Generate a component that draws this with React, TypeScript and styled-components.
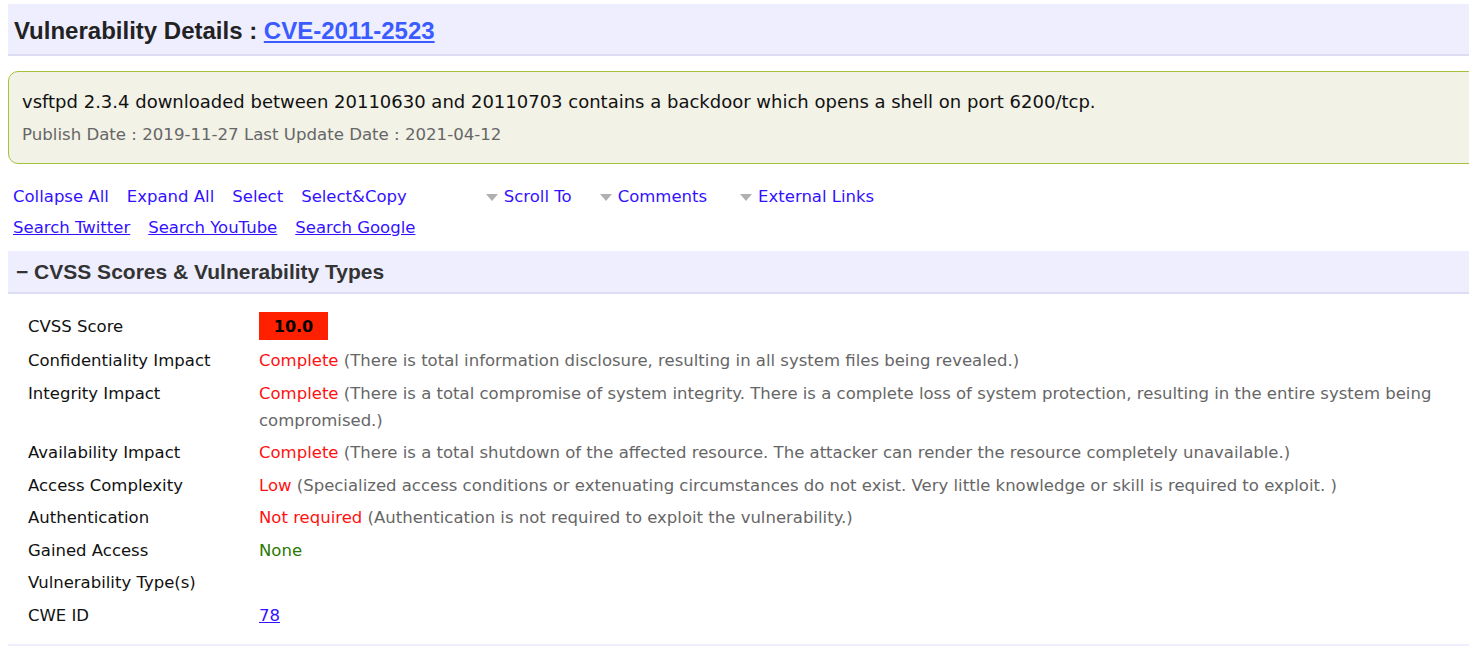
import React from "react";
import styled, { createGlobalStyle } from "styled-components";

const Global = createGlobalStyle`
  html, body { margin: 0; padding: 0; background: #fff; overflow: hidden; }
  body { padding: 4px 0 0 8px; font-family: "DejaVu Sans", Verdana, sans-serif; }
`;

const Page = styled.div`
  width: 1475px;
`;

const TitleBar = styled.div`
  height: 52px;
  background: #eeeeff;
  border-bottom: 2px solid #dcdcf2;
  display: flex;
  align-items: center;
  padding: 3px 0 0 6px;
  box-sizing: border-box;
`;

const Title = styled.h1`
  margin: 0;
  font-family: "Liberation Sans", Arial, sans-serif;
  font-weight: bold;
  font-size: 24px;
  color: #222;
  a { color: #3a5bff; text-decoration: underline; }
`;

const Summary = styled.div`
  margin-top: 15px;
  background: #f2f2e7;
  border: 1px solid #a5c23a;
  border-radius: 10px;
  height: 93px;
  box-sizing: border-box;
  padding: 17px 0 0 13px;
`;

const SummaryText = styled.div`
  font-size: 18px;
  line-height: 26px;
  color: #111;
`;

const DateLine = styled.div`
  font-size: 16.6px;
  line-height: 26px;
  color: #666;
  margin-top: 7px;
`;

const LinkBar = styled.div`
  margin-top: 22px;
  padding-left: 5px;
  display: flex;
  flex-direction: column;
  gap: 11px;
`;

const LinkRow = styled.div`
  display: flex;
  align-items: center;
  height: 20px;
`;

const ActLink = styled.a<{ $underline?: boolean; $gap?: number }>`
  font-family: "DejaVu Sans", Verdana, sans-serif;
  font-size: 16.5px;
  color: #3311ff;
  text-decoration: ${(p) => (p.$underline ? "underline" : "none")};
  margin-right: ${(p) => p.$gap ?? 18}px;
  white-space: nowrap;
`;

const Drop = styled.span<{ $gap: number }>`
  display: inline-flex;
  align-items: center;
  gap: 6px;
  margin-right: ${(p) => p.$gap}px;
`;

const Caret = styled.span`
  width: 0;
  height: 0;
  margin-top: 2px;
  border-left: 6px solid transparent;
  border-right: 6px solid transparent;
  border-top: 7px solid #b0b0b0;
`;

const SectionHead = styled.div`
  margin-top: 14px;
  height: 43px;
  box-sizing: border-box;
  background: #eeeeff;
  border-bottom: 2px solid #dcdcf2;
  display: flex;
  align-items: center;
  padding-left: 8px;
  font-family: "Liberation Sans", Arial, sans-serif;
  font-weight: bold;
  font-size: 21px;
  color: #333;
`;

const Table = styled.div`
  margin-top: 13px;
  padding-left: 20px;
  display: grid;
  grid-template-columns: 231px 1fr;
  width: 1440px;
  font-family: "DejaVu Sans", Verdana, sans-serif;
  font-size: 16.5px;
  line-height: 27px;
`;

const Label = styled.div<{ $tall?: boolean }>`
  color: #111;
  padding: ${(p) => (p.$tall ? "5px 0 4px" : "3px 0 2.5px")};
  display: flex;
  align-items: ${(p) => (p.$tall ? "center" : "flex-start")};
`;

const Value = styled.div<{ $tall?: boolean }>`
  color: #666;
  padding: ${(p) => (p.$tall ? "5px 0 4px" : "3px 0 2.5px")};
`;

const Score = styled.span`
  display: inline-flex;
  align-items: center;
  justify-content: center;
  width: 69px;
  height: 28px;
  background: #ff2000;
  color: #000;
  font-family: "DejaVu Sans", Verdana, sans-serif;
  font-weight: bold;
  font-size: 16px;
`;

const Level = styled.span<{ $tone: "red" | "green" }>`
  color: ${(p) => (p.$tone === "red" ? "#ff1111" : "#2a7a00")};
`;

const CweLink = styled.a`
  color: #3311ff;
  text-decoration: underline;
`;

const BottomBar = styled.div`
  margin-top: 13px;
  height: 10px;
  background: #eeeeff;
`;

const rows: { label: string; level: string; tone: "red" | "green"; desc?: string }[] = [
  {
    label: "Confidentiality Impact",
    level: "Complete",
    tone: "red",
    desc: "(There is total information disclosure, resulting in all system files being revealed.)",
  },
  {
    label: "Integrity Impact",
    level: "Complete",
    tone: "red",
    desc: "(There is a total compromise of system integrity. There is a complete loss of system protection, resulting in the entire system being compromised.)",
  },
  {
    label: "Availability Impact",
    level: "Complete",
    tone: "red",
    desc: "(There is a total shutdown of the affected resource. The attacker can render the resource completely unavailable.)",
  },
  {
    label: "Access Complexity",
    level: "Low",
    tone: "red",
    desc: "(Specialized access conditions or extenuating circumstances do not exist. Very little knowledge or skill is required to exploit. )",
  },
  {
    label: "Authentication",
    level: "Not required",
    tone: "red",
    desc: "(Authentication is not required to exploit the vulnerability.)",
  },
  { label: "Gained Access", level: "None", tone: "green" },
];

export default function App() {
  return (
    <Page>
      <Global />
      <TitleBar>
        <Title>
          Vulnerability Details : <a href="#">CVE-2011-2523</a>
        </Title>
      </TitleBar>
      <Summary>
        <SummaryText>
          vsftpd 2.3.4 downloaded between 20110630 and 20110703 contains a backdoor which opens a shell on port 6200/tcp.
        </SummaryText>
        <DateLine>Publish Date : 2019-11-27 Last Update Date : 2021-04-12</DateLine>
      </Summary>
      <LinkBar>
        <LinkRow>
          <ActLink href="#">Collapse All</ActLink>
          <ActLink href="#">Expand All</ActLink>
          <ActLink href="#">Select</ActLink>
          <ActLink href="#" $gap={79}>Select&amp;Copy</ActLink>
          <Drop $gap={28}>
            <Caret />
            <ActLink href="#" $gap={0}>Scroll To</ActLink>
          </Drop>
          <Drop $gap={33}>
            <Caret />
            <ActLink href="#" $gap={0}>Comments</ActLink>
          </Drop>
          <Drop $gap={0}>
            <Caret />
            <ActLink href="#" $gap={0}>External Links</ActLink>
          </Drop>
        </LinkRow>
        <LinkRow>
          <ActLink href="#" $underline>Search Twitter</ActLink>
          <ActLink href="#" $underline>Search YouTube</ActLink>
          <ActLink href="#" $underline>Search Google</ActLink>
        </LinkRow>
      </LinkBar>
      <SectionHead>− CVSS Scores &amp; Vulnerability Types</SectionHead>
      <Table>
        <Label $tall>CVSS Score</Label>
        <Value $tall>
          <Score>10.0</Score>
        </Value>
        {rows.map((r) => (
          <React.Fragment key={r.label}>
            <Label>{r.label}</Label>
            <Value>
              <Level $tone={r.tone}>{r.level}</Level>
              {r.desc ? " " + r.desc : ""}
            </Value>
          </React.Fragment>
        ))}
        <Label>Vulnerability Type(s)</Label>
        <Value />
        <Label>CWE ID</Label>
        <Value>
          <CweLink href="#">78</CweLink>
        </Value>
      </Table>
      <BottomBar />
    </Page>
  );
}
